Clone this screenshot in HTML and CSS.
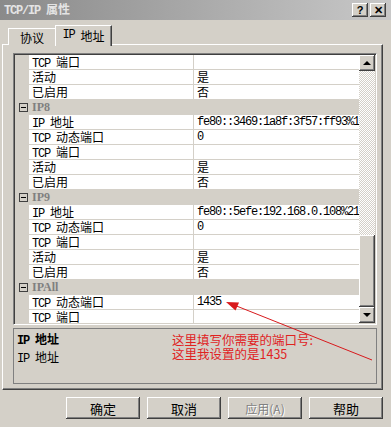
FILE: index.html
```html
<!DOCTYPE html>
<html lang="zh-CN">
<head>
<meta charset="utf-8">
<title>TCP/IP 属性</title>
<link rel="stylesheet" href="styles.css">
</head>
<body>
<div class="titlebar">
  <div class="title"><span class="en">TCP/IP </span>属性</div>
  <div class="caption-btns">
    <div class="cbtn">?</div>
    <div class="cbtn">✕</div>
  </div>
</div>

<div class="tabrow">
  <div class="tab">协议</div>
  <div class="tab active"><span class="en">IP </span>地址</div>
</div>

<div class="panel">
  <div class="grid">
    <div class="rows">
      <div class="row"><div class="gut"></div><div class="lab"><span class="en">TCP </span>端口</div><div class="val"></div></div>
      <div class="row"><div class="gut"></div><div class="lab">活动</div><div class="val">是</div></div>
      <div class="row"><div class="gut"></div><div class="lab">已启用</div><div class="val">否</div></div>
      <div class="row cat"><div class="gut"><span class="minus"></span></div><div class="catlab">IP8</div></div>
      <div class="row"><div class="gut"></div><div class="lab"><span class="en">IP </span>地址</div><div class="val en">fe80::3469:1a8f:3f57:ff93%1</div></div>
      <div class="row"><div class="gut"></div><div class="lab"><span class="en">TCP </span>动态端口</div><div class="val en">0</div></div>
      <div class="row"><div class="gut"></div><div class="lab"><span class="en">TCP </span>端口</div><div class="val"></div></div>
      <div class="row"><div class="gut"></div><div class="lab">活动</div><div class="val">是</div></div>
      <div class="row"><div class="gut"></div><div class="lab">已启用</div><div class="val">否</div></div>
      <div class="row cat"><div class="gut"><span class="minus"></span></div><div class="catlab">IP9</div></div>
      <div class="row"><div class="gut"></div><div class="lab"><span class="en">IP </span>地址</div><div class="val en">fe80::5efe:192.168.0.108%21</div></div>
      <div class="row"><div class="gut"></div><div class="lab"><span class="en">TCP </span>动态端口</div><div class="val en">0</div></div>
      <div class="row"><div class="gut"></div><div class="lab"><span class="en">TCP </span>端口</div><div class="val"></div></div>
      <div class="row"><div class="gut"></div><div class="lab">活动</div><div class="val">是</div></div>
      <div class="row"><div class="gut"></div><div class="lab">已启用</div><div class="val">否</div></div>
      <div class="row cat"><div class="gut"><span class="minus"></span></div><div class="catlab">IPAll</div></div>
      <div class="row"><div class="gut"></div><div class="lab"><span class="en">TCP </span>动态端口</div><div class="val en">1435</div></div>
      <div class="row"><div class="gut"></div><div class="lab"><span class="en">TCP </span>端口</div><div class="val"></div></div>
    </div>
    <div class="vscroll">
      <div class="sbtn"><span class="tri-up"></span></div>
      <div class="track"><div class="thumb"></div></div>
      <div class="sbtn"><span class="tri-down"></span></div>
    </div>
  </div>
  <div class="desc">
    <div class="desc-title"><span class="en">IP </span>地址</div>
    <div class="desc-text"><span class="en">IP </span>地址</div>
  </div>
</div>

<div class="buttons">
  <div class="btn">确定</div>
  <div class="btn">取消</div>
  <div class="btn disabled">应用(A)</div>
  <div class="btn">帮助</div>
</div>

<div class="note">这里填写你需要的端口号:<br>这里我设置的是1435</div>
<svg class="arrow" width="391" height="427" viewBox="0 0 391 427">
  <line x1="372" y1="360" x2="234" y2="305" stroke="#d8191c" stroke-width="1"/>
  <polygon points="226,302 239,302.5 235.5,310.5" fill="#d8191c"/>
</svg>
</body>
</html>
```

FILE: styles.css
```css
* { box-sizing: border-box; }

body {
  margin: 0;
  width: 391px;
  height: 427px;
  overflow: hidden;
  position: relative;
  background: #d4d0c8;
  font-family: "Noto Sans CJK SC", sans-serif;
  font-size: 12px;
  color: #000;
}

.en {
  font-family: "Liberation Mono", monospace;
  letter-spacing: -1.2px;
  white-space: pre;
}

/* title bar */
.titlebar {
  height: 20px;
  background: linear-gradient(90deg, #8a8a8a, #c8c8c8);
  display: flex;
  align-items: center;
  justify-content: space-between;
  padding: 0 5px 0 4px;
}
.title {
  color: #e4e4e4;
  font-weight: bold;
  font-size: 12px;
  line-height: 14px;
}
.caption-btns { display: flex; gap: 2px; }
.cbtn {
  width: 16px;
  height: 14px;
  background: #d4d0c8;
  box-shadow: inset -1px -1px #404040, inset 1px 1px #fff, inset -2px -2px #808080;
  display: flex;
  align-items: center;
  justify-content: center;
  font-family: "Liberation Sans", sans-serif;
  font-weight: bold;
  font-size: 11px;
  line-height: 1;
}

/* tabs */
.tabrow {
  height: 24px;
  display: flex;
  align-items: flex-end;
  padding-left: 8px;
  position: relative;
  z-index: 1;
}
.tab {
  width: 48px;
  height: 17px;
  margin-bottom: -1px;
  border-top: 1px solid #fff;
  border-left: 1px solid #fff;
  border-right: 1px solid #404040;
  display: flex;
  align-items: center;
  justify-content: center;
  font-size: 12px;
  background: #d4d0c8;
}
.tab.active {
  width: 57px;
  height: 21px;
  margin-left: -1px;
  margin-bottom: -2px;
  box-shadow: inset -1px 0 #808080;
  padding-bottom: 2px;
}

/* tab panel */
.panel {
  width: 381px;
  height: 346px;
  margin-left: 2px;
  border-top: 1px solid #fff;
  border-left: 1px solid #fff;
  border-right: 1px solid #404040;
  border-bottom: 1px solid #404040;
  box-shadow: inset -1px -1px #808080;
  padding: 8px 0 0 10px;
}

.grid {
  width: 364px;
  height: 272px;
  border-top: 1px solid #808080;
  border-left: 1px solid #808080;
  border-right: 1px solid #fff;
  border-bottom: 1px solid #fff;
  box-shadow: inset 1px 1px #404040, inset -1px -1px #d4d0c8;
  padding: 1px;
  display: flex;
  overflow: hidden;
}
.rows {
  width: 344px;
  height: 268px;
  overflow: hidden;
  display: flex;
  flex-direction: column;
}
.row {
  flex: 0 0 15px;
  display: grid;
  grid-template-columns: 14px 165px 165px;
  height: 15px;
  line-height: 14px;
  white-space: nowrap;
}
.gut {
  background: #d4d0c8;
  display: flex;
  align-items: center;
  justify-content: center;
}
.lab {
  background: #fff;
  border-right: 1px solid #d4d0c8;
  border-bottom: 1px solid #d4d0c8;
  padding-left: 3px;
  overflow: hidden;
}
.val {
  background: #fff;
  border-bottom: 1px solid #d4d0c8;
  padding-left: 3px;
  overflow: hidden;
}
.row.cat { background: #d4d0c8; }
.catlab {
  grid-column: 2 / 4;
  padding-left: 3px;
  font-family: "Liberation Serif", serif;
  font-weight: bold;
  color: #808080;
  font-size: 12px;
}
.minus {
  width: 9px;
  height: 9px;
  border: 1px solid #404040;
  position: relative;
  margin-left: 2px;
}
.minus::after {
  content: "";
  position: absolute;
  left: 1px;
  top: 3px;
  width: 5px;
  height: 1px;
  background: #000;
}

/* scrollbar */
.vscroll {
  width: 16px;
  height: 268px;
  display: flex;
  flex-direction: column;
}
.sbtn, .thumb {
  background: #d4d0c8;
  box-shadow: inset -1px -1px #404040, inset 1px 1px #fff, inset -2px -2px #808080;
}
.sbtn {
  height: 16px;
  flex: 0 0 16px;
  display: flex;
  align-items: center;
  justify-content: center;
}
.track {
  flex: 1;
  display: flex;
  flex-direction: column;
  justify-content: flex-end;
  background: repeating-conic-gradient(#d4d0c8 0 25%, #fff 0 50%) 0 0 / 2px 2px;
}
.thumb { height: 72px; }
.tri-up, .tri-down {
  width: 0;
  height: 0;
  border-left: 4px solid transparent;
  border-right: 4px solid transparent;
}
.tri-up { border-bottom: 4px solid #000; }
.tri-down { border-top: 4px solid #000; }

/* description */
.desc {
  width: 364px;
  height: 56px;
  margin-top: 3px;
  border: 1px solid #808080;
  padding: 2px 3px;
  line-height: 15px;
}
.desc-title { font-weight: bold; }

/* buttons */
.buttons {
  display: flex;
  justify-content: flex-end;
  gap: 7px;
  padding-right: 8px;
  margin-top: 7px;
}
.btn {
  width: 74px;
  height: 22px;
  background: #d4d0c8;
  box-shadow: inset -1px -1px #404040, inset 1px 1px #fff, inset -2px -2px #808080;
  display: flex;
  align-items: center;
  justify-content: center;
  font-size: 13px;
}
.btn.disabled {
  color: #808080;
  text-shadow: 1px 1px #fff;
  font-size: 12px;
}

/* annotation overlay */
.note {
  position: absolute;
  left: 172px;
  top: 333px;
  color: #e0221f;
  font-size: 12.5px;
  line-height: 14px;
}
.arrow {
  position: absolute;
  left: 0;
  top: 0;
  pointer-events: none;
}
```
